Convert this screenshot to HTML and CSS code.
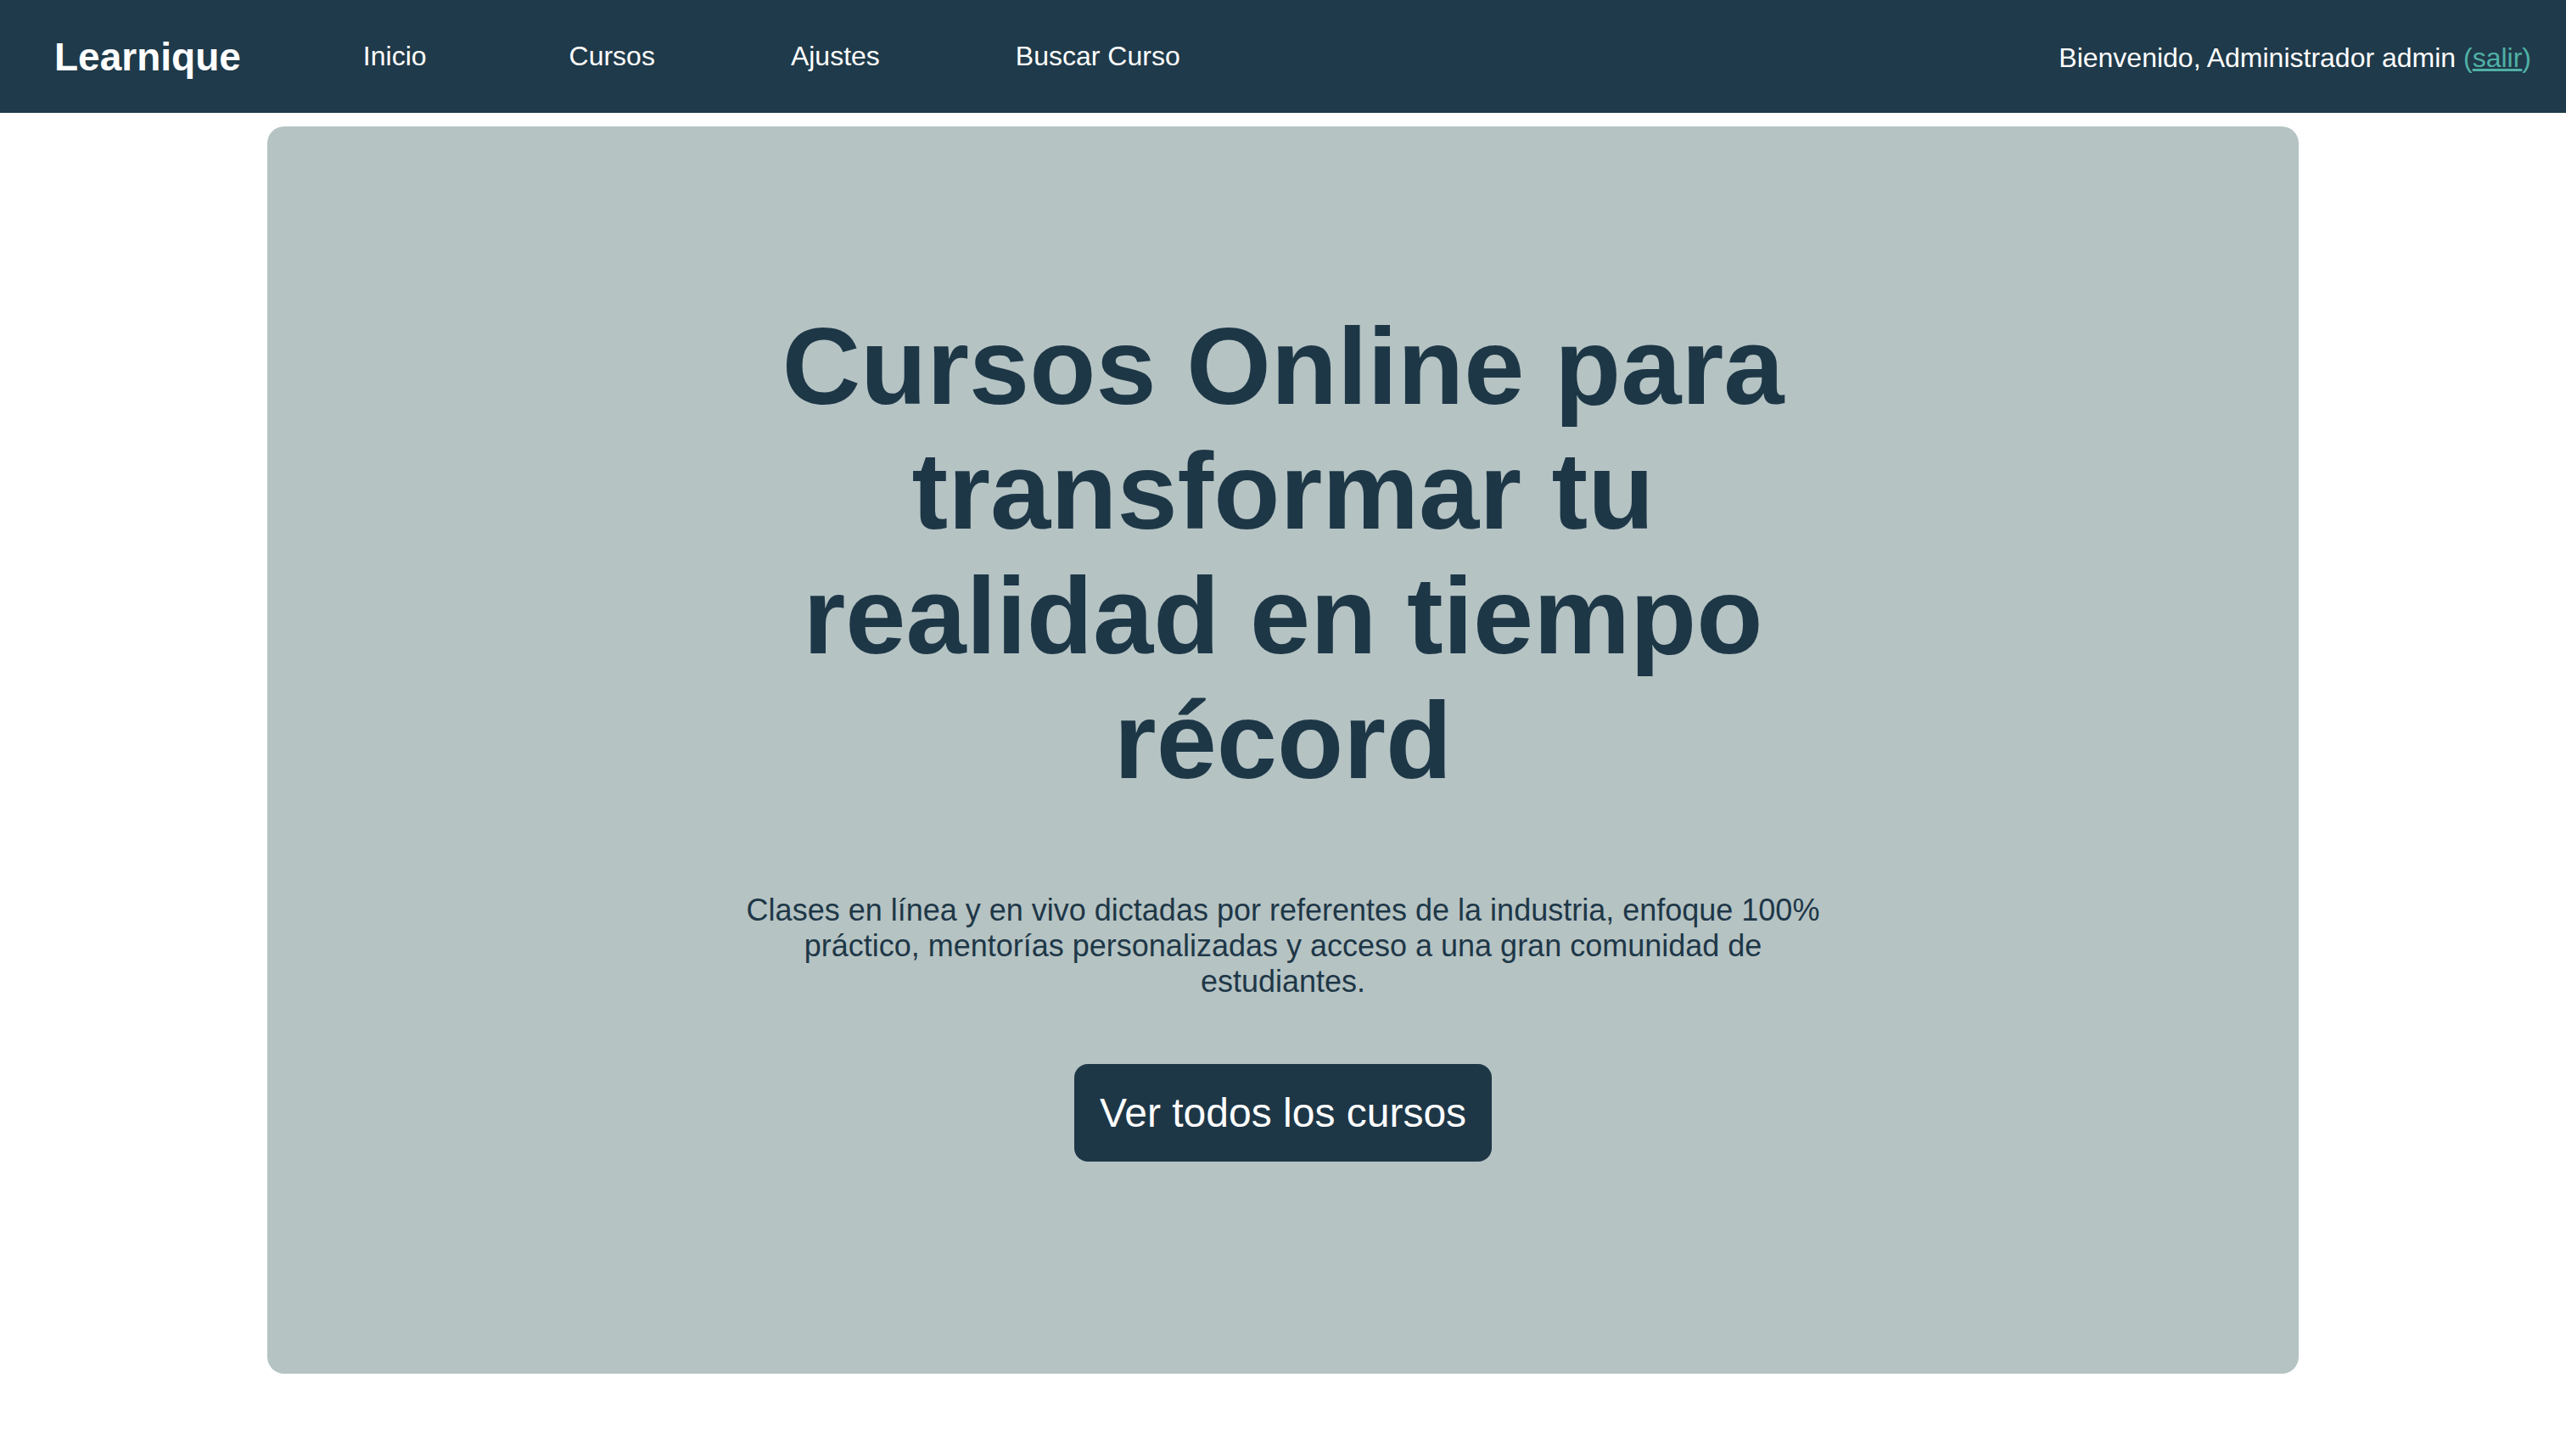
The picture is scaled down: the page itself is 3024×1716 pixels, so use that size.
FILE: index.html
```html
<!DOCTYPE html>
<html lang="es">
<head>
<meta charset="utf-8">
<title>Learnique</title>
<link rel="stylesheet" href="styles.css">
</head>
<body>
<header class="navbar">
  <a class="brand" href="#">Learnique</a>
  <nav class="nav-links">
    <a class="nav-first" href="#">Inicio</a>
    <a href="#">Cursos</a>
    <a href="#">Ajustes</a>
    <a href="#">Buscar Curso</a>
  </nav>
  <div class="welcome">Bienvenido, Administrador admin <span class="logout">(<a href="#">salir</a>)</span></div>
</header>
<main class="hero">
  <div class="hero-inner">
    <h1 class="hero-title">Cursos Online para transformar tu realidad en tiempo récord</h1>
    <p class="hero-text">Clases en línea y en vivo dictadas por referentes de la industria, enfoque 100% práctico, mentorías personalizadas y acceso a una gran comunidad de estudiantes.</p>
    <a class="hero-button" href="#">Ver todos los cursos</a>
  </div>
</main>
</body>
</html>
```
FILE: styles.css
```css
html, body {
  margin: 0;
  padding: 0;
  background: #ffffff;
  font-family: "Liberation Sans", Arial, sans-serif;
}

.navbar {
  height: 133px;
  background: #1f3a4a;
  display: flex;
  align-items: center;
  padding: 0 41px 0 64px;
  box-sizing: border-box;
}

.brand {
  color: #ffffff;
  font-weight: 700;
  font-size: 46px;
  text-decoration: none;
}

.nav-links {
  display: flex;
  gap: 160px;
  margin-left: 144px;
}

.nav-links a {
  color: #ffffff;
  font-size: 32px;
  text-decoration: none;
}

.nav-links .nav-first {
  margin-right: 8px;
}

.welcome {
  margin-left: auto;
  color: #ffffff;
  font-size: 32px;
  padding-top: 4px;
}

.logout {
  color: #4fb0a5;
}

.logout a {
  color: #4fb0a5;
  text-decoration: underline;
}

.hero {
  width: 2394px;
  height: 1470px;
  margin: 16px auto 0;
  background: #b5c3c3;
  border-radius: 20px;
  box-sizing: border-box;
  padding-top: 209px;
}

.hero-inner {
  max-width: 1300px;
  margin: 0 auto;
  display: flex;
  flex-direction: column;
  align-items: center;
  text-align: center;
  color: #1e3747;
}

.hero-title {
  margin: 0;
  font-size: 128px;
  font-weight: 700;
  line-height: normal;
}

.hero-text {
  margin: 106px 0 0;
  font-size: 36px;
  line-height: normal;
}

.hero-button {
  margin-top: 76px;
  background: #1e3747;
  color: #ffffff;
  font-size: 48px;
  text-decoration: none;
  padding: 30px 30px;
  border-radius: 16px;
}
```
